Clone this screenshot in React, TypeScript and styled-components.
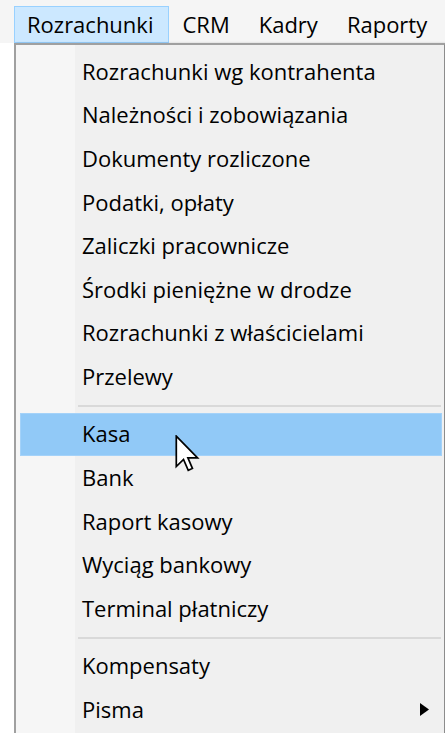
import React from "react";
import styled, { createGlobalStyle } from "styled-components";

const GlobalStyle = createGlobalStyle`
  html, body {
    margin: 0;
    padding: 0;
    background: #ffffff;
  }
  body {
    font-family: "Open Sans", "Noto Sans", Arial, sans-serif;
    color: #000000;
    -webkit-font-smoothing: antialiased;
  }
`;

const Frame = styled.div`
  width: 445px;
  height: 733px;
  overflow: hidden;
  display: flex;
  flex-direction: column;
`;

const MenuBar = styled.div`
  display: flex;
  align-items: stretch;
  height: 37px;
  padding: 6px 0 0 14px;
  background: #f5f5f5;
`;

const BarItem = styled.div<{ $open?: boolean }>`
  display: flex;
  align-items: center;
  padding: 0 15px 1px 12px;
  font-size: 22px;
  border: 1px solid ${(p) => (p.$open ? "#99d1ff" : "transparent")};
  background: ${(p) => (p.$open ? "#cce8ff" : "transparent")};
`;

const Dropdown = styled.div`
  margin-left: 14px;
  width: 422px;
  border: 2px solid #a0a0a0;
  border-right-color: #8c8c8c;
  border-bottom: none;
  box-shadow: 2px 0 2px rgba(0, 0, 0, 0.18);
  padding: 5px 2px 0 4px;
  background: linear-gradient(to right, #f6f6f6 59px, #f0f0f0 59px);
  flex: 1;
`;

const Row = styled.div<{ $active?: boolean }>`
  position: relative;
  display: flex;
  align-items: center;
  height: 43.6px;
  box-sizing: border-box;
  padding: 0 13px 2px 62px;
  font-size: 22px;
  white-space: nowrap;
  background: ${(p) => (p.$active ? "#91c9f7" : "transparent")};
  box-shadow: ${(p) => (p.$active ? "inset 0 0 0 1px #a4d2f9" : "none")};
`;

const Separator = styled.div`
  height: 13.9px;
  display: flex;
  align-items: center;
  padding: 0 1px 0 58px;

  &::before {
    content: "";
    flex: 1;
    height: 2px;
    background: #d9d9d9;
  }
`;

const SubArrow = styled.svg`
  margin-left: auto;
  width: 9px;
  height: 13px;
  margin-top: 1px;
`;

const Pointer = styled.svg`
  position: absolute;
  left: 155px;
  top: 22px;
  width: 25px;
  height: 38px;
  pointer-events: none;
`;

type Entry =
  | { kind: "item"; label: string; active?: boolean; submenu?: boolean }
  | { kind: "sep" };

const entries: Entry[] = [
  { kind: "item", label: "Rozrachunki wg kontrahenta" },
  { kind: "item", label: "Należności i zobowiązania" },
  { kind: "item", label: "Dokumenty rozliczone" },
  { kind: "item", label: "Podatki, opłaty" },
  { kind: "item", label: "Zaliczki pracownicze" },
  { kind: "item", label: "Środki pieniężne w drodze" },
  { kind: "item", label: "Rozrachunki z właścicielami" },
  { kind: "item", label: "Przelewy" },
  { kind: "sep" },
  { kind: "item", label: "Kasa", active: true },
  { kind: "item", label: "Bank" },
  { kind: "item", label: "Raport kasowy" },
  { kind: "item", label: "Wyciąg bankowy" },
  { kind: "item", label: "Terminal płatniczy" },
  { kind: "sep" },
  { kind: "item", label: "Kompensaty" },
  { kind: "item", label: "Pisma", submenu: true },
];

const barItems = ["Rozrachunki", "CRM", "Kadry", "Raporty"];

function MousePointer() {
  return (
    <Pointer viewBox="0 0 13 20">
      <path
        d="M0.6 0.6 L0.6 16.6 L4.4 12.9 L6.9 18.6 L9.1 17.6 L6.7 12 L11.8 12 Z"
        fill="#ffffff"
        stroke="#000000"
        strokeWidth="0.9"
        strokeLinejoin="miter"
      />
    </Pointer>
  );
}

export default function App() {
  return (
    <>
      <GlobalStyle />
      <Frame>
        <MenuBar>
          {barItems.map((label, i) => (
            <BarItem key={label} $open={i === 0}>
              {label}
            </BarItem>
          ))}
        </MenuBar>
        <Dropdown>
          {entries.map((e, i) =>
            e.kind === "sep" ? (
              <Separator key={`sep-${i}`} />
            ) : (
              <Row key={e.label} $active={e.active}>
                {e.label}
                {e.active && <MousePointer />}
                {e.submenu && (
                  <SubArrow viewBox="0 0 9 13">
                    <path d="M0 0 L9 6.5 L0 13 Z" fill="#000000" />
                  </SubArrow>
                )}
              </Row>
            )
          )}
        </Dropdown>
      </Frame>
    </>
  );
}
